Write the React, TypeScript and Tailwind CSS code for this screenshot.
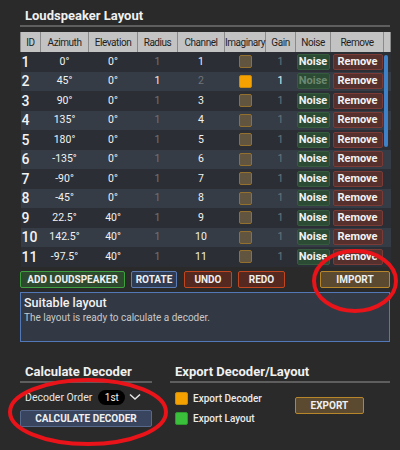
import React from "react";

interface Speaker {
  id: number;
  azimuth: string;
  elevation: string;
  imaginary: boolean;
}

const speakers: Speaker[] = [
  { id: 1, azimuth: "0°", elevation: "0°", imaginary: false },
  { id: 2, azimuth: "45°", elevation: "0°", imaginary: true },
  { id: 3, azimuth: "90°", elevation: "0°", imaginary: false },
  { id: 4, azimuth: "135°", elevation: "0°", imaginary: false },
  { id: 5, azimuth: "180°", elevation: "0°", imaginary: false },
  { id: 6, azimuth: "-135°", elevation: "0°", imaginary: false },
  { id: 7, azimuth: "-90°", elevation: "0°", imaginary: false },
  { id: 8, azimuth: "-45°", elevation: "0°", imaginary: false },
  { id: 9, azimuth: "22.5°", elevation: "40°", imaginary: false },
  { id: 10, azimuth: "142.5°", elevation: "40°", imaginary: false },
  { id: 11, azimuth: "-97.5°", elevation: "40°", imaginary: false },
];

const headers = [
  { label: "ID", w: "w-[20px]" },
  { label: "Azimuth", w: "w-[48px]" },
  { label: "Elevation", w: "w-[49px]" },
  { label: "Radius", w: "w-[40px]" },
  { label: "Channel", w: "w-[47px]" },
  { label: "Imaginary", w: "w-[41px]" },
  { label: "Gain", w: "w-[30px]" },
  { label: "Noise", w: "w-[35px]" },
  { label: "Remove", w: "w-[53px]" },
  { label: "", w: "w-[7px]" },
];

const SectionTitle = ({ children }: { children: React.ReactNode }) => (
  <div className="border-b-2 border-[#5e5e5e] pb-[1px] pl-[5px] text-[13px] font-bold leading-[16px] text-[#f0f0f0]">
    {children}
  </div>
);

const App = () => {
  return (
    <div
      className="relative h-[450px] w-[400px] overflow-hidden bg-[#2a2a2a] pl-[20px] pr-[10px] pt-[8px]"
      style={{ fontFamily: "Roboto, 'Liberation Sans', sans-serif" }}
    >
      <SectionTitle>Loudspeaker Layout</SectionTitle>

      <div className="relative mt-[5px]">
        <table className="w-[370px] table-fixed border-collapse">
          <thead>
            <tr className="h-[20px] bg-[#c3c3c3]">
              {headers.map((h, i) => (
                <th
                  key={i}
                  className={`${h.w} whitespace-nowrap border-x border-[#8a8a8a] p-0 text-center text-[10px] font-normal tracking-[-0.45px] text-[#1e1e1e]`}
                >
                  {h.label}
                </th>
              ))}
            </tr>
          </thead>
          <tbody>
            {speakers.map((s) => {
              const dim = "text-[#6f747a]";
              const bright = "text-[#f2f2f2]";
              return (
                <tr
                  key={s.id}
                  className={`h-[19.5px] ${s.id % 2 === 0 ? "bg-[#353c46]" : "bg-[#2b2f35]"}`}
                >
                  <td className="p-0 pl-[1px] text-[14px] font-medium leading-none text-[#f2f2f2]">
                    {s.id}
                  </td>
                  <td className="p-0 text-center text-[10.5px] text-[#f2f2f2]">{s.azimuth}</td>
                  <td className="p-0 text-center text-[10.5px] text-[#f2f2f2]">{s.elevation}</td>
                  <td className={`p-0 text-center text-[10.5px] ${s.imaginary ? bright : dim}`}>1</td>
                  <td className={`p-0 text-center text-[10.5px] ${s.imaginary ? dim : bright}`}>{s.id}</td>
                  <td className="p-0">
                    <div className="flex justify-center">
                      <div
                        className={`h-[13px] w-[13px] rounded-[2px] border ${
                          s.imaginary ? "border-[#c98a10] bg-[#f5a200]" : "border-[#94702f] bg-[#62553f]"
                        }`}
                      />
                    </div>
                  </td>
                  <td className={`p-0 text-center text-[10.5px] ${s.imaginary ? bright : dim}`}>1</td>
                  <td className="p-0 pl-[1px]">
                    <div
                      className={`flex h-[16px] w-[33px] items-center justify-center rounded-[2px] border border-[#355a3d] bg-[#2c4b34] text-[11px] font-bold ${
                        s.imaginary ? "text-[#6d8a72]" : "text-[#f2f2f2]"
                      }`}
                    >
                      Noise
                    </div>
                  </td>
                  <td className="p-0 pl-[2px]">
                    <div className="flex h-[16px] w-[50px] items-center justify-center rounded-[2px] border border-[#7a3b36] bg-[#55302d] text-[11px] font-bold text-[#f2f2f2]">
                      Remove
                    </div>
                  </td>
                  <td className="p-0" />
                </tr>
              );
            })}
          </tbody>
        </table>
        <div className="absolute right-[2px] top-[23px] h-[92px] w-[4px] rounded-[2px] bg-[#3f82c8]" />
      </div>

      <div className="mt-[4px] flex items-center">
        <button className="h-[17px] w-[105px] rounded-[2px] border border-[#3fa03f] bg-[#2d4a2f] text-[10px] font-bold text-[#f0f0f0]">
          ADD LOUDSPEAKER
        </button>
        <button className="ml-[6px] h-[17px] w-[46px] rounded-[2px] border border-[#5b7bb5] bg-[#2f3b52] text-[10px] font-bold text-[#f0f0f0]">
          ROTATE
        </button>
        <button className="ml-[7px] h-[17px] w-[48px] rounded-[2px] border border-[#c0461f] bg-[#55291f] text-[10px] font-bold text-[#f0f0f0]">
          UNDO
        </button>
        <button className="ml-[6px] h-[17px] w-[47px] rounded-[2px] border border-[#c0461f] bg-[#55291f] text-[10px] font-bold text-[#f0f0f0]">
          REDO
        </button>
        <button className="ml-auto h-[17px] w-[70px] rounded-[2px] border border-[#b7862a] bg-[#5b4930] text-[10px] font-bold text-[#f0f0f0]">
          IMPORT
        </button>
      </div>

      <div className="mt-[4px] h-[50px] w-[370px] border border-[#5378b8] bg-[#333944] px-[3px] pt-[2px]">
        <div className="text-[12.5px] font-medium leading-[16px] text-[#f2f2f2]">Suitable layout</div>
        <div className="text-[10px] leading-[14px] text-[#c8c8c8]">
          The layout is ready to calculate a decoder.
        </div>
      </div>

      <div className="mt-[22px] flex">
        <div className="w-[132px]">
          <SectionTitle>Calculate Decoder</SectionTitle>
          <div className="mt-[7px] flex items-center pl-[5px]">
            <span className="text-[10.5px] text-[#e6e6e6]">Decoder Order</span>
            <span className="ml-[6px] flex h-[15px] w-[27px] items-center justify-center rounded-full bg-black text-[10px] text-[#f0f0f0]">
              1st
            </span>
            <svg width="12" height="8" viewBox="0 0 12 8" className="ml-[4px]">
              <path d="M1 1.5 L6 6 L11 1.5" fill="none" stroke="#e6e6e6" strokeWidth="1.5" />
            </svg>
          </div>
          <button className="mt-[5px] h-[17px] w-[132px] rounded-[2px] border border-[#56688c] bg-[#39445e] text-[10px] font-bold text-[#f0f0f0]">
            CALCULATE DECODER
          </button>
        </div>

        <div className="ml-[18px] flex-1">
          <SectionTitle>Export Decoder/Layout</SectionTitle>
          <div className="flex pl-[5px]">
            <div className="pt-[8px]">
              <div className="flex items-center">
                <div className="h-[13px] w-[13px] rounded-[2px] border border-[#c98a10] bg-[#f5a200]" />
                <span className="ml-[5px] text-[10px] font-medium text-[#eaeaea]">Export Decoder</span>
              </div>
              <div className="mt-[5px] flex items-center">
                <div className="h-[13px] w-[13px] rounded-[2px] border border-[#2e9a2e] bg-[#3bc03b]" />
                <span className="ml-[5px] text-[10px] font-medium text-[#eaeaea]">Export Layout</span>
              </div>
            </div>
            <button className="ml-[33px] mt-[14px] h-[17px] w-[69px] rounded-[2px] border border-[#b7862a] bg-[#5b4930] text-[10px] font-bold text-[#f0f0f0]">
              EXPORT
            </button>
          </div>
        </div>
      </div>

      <svg className="pointer-events-none absolute left-0 top-0" width="400" height="450">
        <ellipse cx="355" cy="281" rx="41" ry="30" fill="none" stroke="#e8141a" strokeWidth="4" />
        <ellipse cx="88" cy="412" rx="78" ry="32" fill="none" stroke="#e8141a" strokeWidth="4" />
      </svg>
    </div>
  );
};

export default App;
